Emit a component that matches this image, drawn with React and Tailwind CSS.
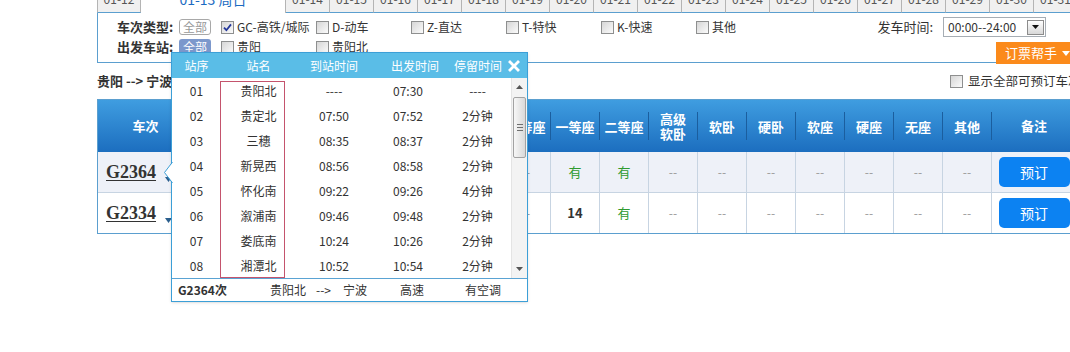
import React from "react";

const dates = [
  "01-14", "01-15", "01-16", "01-17", "01-18", "01-19", "01-20", "01-21", "01-22",
  "01-23", "01-24", "01-25", "01-26", "01-27", "01-28", "01-29", "01-30", "01-31",
];

const trainTypes = [
  { label: "GC-高铁/城际", checked: true },
  { label: "D-动车" },
  { label: "Z-直达" },
  { label: "T-特快" },
  { label: "K-快速" },
  { label: "其他" },
];

const stops = [
  ["01", "贵阳北", "----", "07:30", "----"],
  ["02", "贵定北", "07:50", "07:52", "2分钟"],
  ["03", "三穗", "08:35", "08:37", "2分钟"],
  ["04", "新晃西", "08:56", "08:58", "2分钟"],
  ["05", "怀化南", "09:22", "09:26", "4分钟"],
  ["06", "溆浦南", "09:46", "09:48", "2分钟"],
  ["07", "娄底南", "10:24", "10:26", "2分钟"],
  ["08", "湘潭北", "10:52", "10:54", "2分钟"],
];

// widths are spelled out so tailwind picks them up
const cols = [
  { w: "w-[58px]", h: "出发站" },
  { w: "w-[58px]", h: "到达站" },
  { w: "w-[52px]", h: "出发时间" },
  { w: "w-[52px]", h: "到达时间" },
  { w: "w-[45px]", h: "历时" },
  { w: "w-[49px]", h: "商务座" },
  { w: "w-[49px]", h: "特等座" },
  { w: "w-[49px]", h: "一等座" },
  { w: "w-[49px]", h: "二等座" },
  { w: "w-[49px]", h: "高级\n软卧" },
  { w: "w-[49px]", h: "软卧" },
  { w: "w-[49px]", h: "硬卧" },
  { w: "w-[49px]", h: "软座" },
  { w: "w-[49px]", h: "硬座" },
  { w: "w-[49px]", h: "无座" },
  { w: "w-[49px]", h: "其他" },
];

const trains = [
  {
    no: "G2364",
    bg: "bg-[#eef1f8]",
    cells: ["贵阳北", "宁波", "07:30", "18:02", "10:32", "--", "--", "有", "有", "--", "--", "--", "--", "--", "--", "--"],
  },
  {
    no: "G2334",
    bg: "bg-white",
    cells: ["贵阳北", "宁波", "08:25", "18:56", "10:31", "--", "--", "14", "有", "--", "--", "--", "--", "--", "--", "--"],
  },
];

const Check = ({ checked }) => (
  <span className="inline-flex h-[13px] w-[13px] shrink-0 items-center justify-center border border-[#8e8f8f] bg-linear-to-br from-[#d6d6d6] to-[#fbfbfb]">
    {checked && (
      <svg width="9" height="9" viewBox="0 0 9 9">
        <path d="M1 4.6 L3.4 7.2 L8 1.4" fill="none" stroke="#24379a" strokeWidth="1.8" />
      </svg>
    )}
  </span>
);

const Tab = ({ label, first }) => (
  <div
    className={`flex h-[27px] w-[44px] shrink-0 items-center justify-center border-r border-b border-r-[#b4b4b4] border-b-[#5b9fcf] bg-[#f0f0f0] text-[12px] text-[#555] ${first ? "w-[43px] border-l border-l-[#b4b4b4]" : ""}`}
  >
    {label}
  </div>
);

const Cell = ({ w, value }) => {
  let cls = "text-[12px] text-[#999]";
  if (value === "有") cls = "text-[13px] text-[#2f9a2f]";
  else if (value !== "--") cls = "text-[13px] font-bold text-[#333]";
  return (
    <div className={`flex h-full shrink-0 items-center justify-center border-r border-[#c7d4e2] ${w} ${cls}`}>
      {value}
    </div>
  );
};

const StopPopup = () => (
  <div className="absolute left-[171px] top-[52px] h-[250px] w-[357px] border border-[#3c9fd7] bg-white text-[12px] text-[#333] shadow-sm">
    {/* pointer toward the train number */}
    <svg className="absolute -left-[8px] top-[109px]" width="9" height="21" viewBox="0 0 9 21">
      <path d="M9 0 L0.5 10.5 L9 21 Z" fill="#fff" />
      <path d="M8.5 0 L0.5 10.5 L8.5 21" fill="none" stroke="#3c9fd7" strokeWidth="1" />
    </svg>

    <div className="flex h-[25px] items-center bg-[#5abde7] text-white">
      <span className="flex w-[49px] justify-center">站序</span>
      <span className="flex w-[75px] justify-center">站名</span>
      <span className="flex w-[76px] justify-center">到站时间</span>
      <span className="flex w-[86px] justify-center">出发时间</span>
      <span className="flex w-[40px] justify-center whitespace-nowrap">停留时间</span>
      <svg className="ml-[10px]" width="12" height="12" viewBox="0 0 12 12">
        <path d="M2 2 L10 10 M10 2 L2 10" stroke="#fff" strokeWidth="2.8" strokeLinecap="square" />
      </svg>
    </div>

    <div className="relative flex h-[200px]">
      <div className="w-[339px]">
        {stops.map((s) => (
          <div key={s[0]} className="flex h-[25px] items-center">
            <span className="w-[49px] text-center">{s[0]}</span>
            <span className="w-[75px] text-center">{s[1]}</span>
            <span className="w-[76px] text-center">{s[2]}</span>
            <span className="w-[72px] text-center">{s[3]}</span>
            <span className="w-[67px] text-center">{s[4]}</span>
          </div>
        ))}
      </div>
      {/* highlighted station column */}
      <div className="pointer-events-none absolute left-[48px] top-[3px] h-[197px] w-[65px] border border-[#c4546d]" />

      {/* scrollbar */}
      <div className="flex w-[16px] flex-col border-l border-[#e4e4e4] bg-[#f3f3f3]">
        <div className="flex h-[18px] items-center justify-center">
          <svg width="7" height="4" viewBox="0 0 7 4">
            <path d="M0 4 L3.5 0 L7 4 Z" fill="#555" />
          </svg>
        </div>
        <div className="mx-[1px] mt-[1px] flex h-[61px] items-center justify-center rounded-[2px] border border-[#a2a2a2] bg-linear-to-r from-[#f7f7f7] to-[#d9d9d9]">
          <div className="flex flex-col gap-[2px]">
            <div className="h-px w-[6px] bg-[#6f6f6f]" />
            <div className="h-px w-[6px] bg-[#6f6f6f]" />
            <div className="h-px w-[6px] bg-[#6f6f6f]" />
          </div>
        </div>
        <div className="flex-1" />
        <div className="flex h-[18px] items-center justify-center">
          <svg width="7" height="4" viewBox="0 0 7 4">
            <path d="M0 0 L3.5 4 L7 0 Z" fill="#555" />
          </svg>
        </div>
      </div>
    </div>

    <div className="flex h-[23px] items-center border-t border-[#5aa3d3] pl-[6px]">
      <span className="w-[92px] font-bold">G2364次</span>
      <span className="w-[46px]">贵阳北</span>
      <span className="w-[27px]">--&gt;</span>
      <span className="w-[57px]">宁波</span>
      <span className="w-[65px]">高速</span>
      <span>有空调</span>
    </div>
  </div>
);

export default function App() {
  return (
    <div className="relative h-[352px] w-[1070px] overflow-hidden bg-white font-['Noto_Sans_CJK_SC','Noto_Sans',sans-serif] text-[#333]">
      <div className="ml-[97px] w-[979px]">
        {/* date tabs (top edge is cut off) */}
        <div className="mt-[-14px] flex h-[27px]">
          <Tab label="01-12" first />
          <div className="flex h-[27px] w-[145px] shrink-0 items-center justify-center border-r border-[#b4b4b4] bg-white text-[14px] text-[#1b6bc2]">
            01-13 周日
          </div>
          {dates.map((d) => (
            <Tab key={d} label={d} />
          ))}
        </div>

        {/* filters */}
        <div className="border-l border-b border-[#5b9fcf] pb-[5px] pt-[4px]">
          <div className="flex h-[20px] items-center pl-[19px] pr-[30px]">
            <span className="w-[62px] shrink-0 text-[13px] font-bold">车次类型:</span>
            <span className="flex h-[16px] w-[32px] items-center justify-center rounded-[3px] border border-[#a8a8a8] text-[12px] leading-none text-[#999]">
              全部
            </span>
            <div className="ml-[10px] flex">
              {trainTypes.map((t) => (
                <label key={t.label} className="flex w-[95px] items-center text-[12px]">
                  <Check checked={t.checked} />
                  <span className="ml-[3px]">{t.label}</span>
                </label>
              ))}
            </div>
            <div className="ml-auto flex items-center">
              <span className="text-[13px]">发车时间:</span>
              <div className="ml-[10px] flex h-[20px] w-[103px] items-center border border-[#a6adb4] bg-white pl-[4px] text-[12px]">
                <span>00:00--24:00</span>
                <span className="ml-auto mr-[1px] flex h-[15px] w-[17px] items-center justify-center border border-[#8c8c8c] bg-linear-to-b from-white to-[#d8d8d8]">
                  <svg width="7" height="4" viewBox="0 0 7 4">
                    <path d="M0 0 L3.5 4 L7 0 Z" fill="#111" />
                  </svg>
                </span>
              </div>
            </div>
          </div>
          <div className="flex h-[20px] items-center pl-[19px]">
            <span className="w-[62px] shrink-0 text-[13px] font-bold">出发车站:</span>
            <span className="flex h-[16px] w-[32px] items-center justify-center rounded-[3px] bg-[#7c98cc] text-[12px] leading-none text-white">
              全部
            </span>
            <div className="ml-[10px] flex">
              <label className="flex w-[95px] items-center text-[12px]">
                <Check />
                <span className="ml-[3px]">贵阳</span>
              </label>
              <label className="flex w-[95px] items-center text-[12px]">
                <Check />
                <span className="ml-[3px]">贵阳北</span>
              </label>
            </div>
            <div className="ml-auto mt-[5px] flex h-[22px] w-[80px] self-start items-center bg-[#fb8a1b] pl-[9px] text-[13px] text-white">
              <span>订票帮手</span>
              <svg className="ml-[5px]" width="8" height="5" viewBox="0 0 8 5">
                <path d="M0 0 L4 5 L8 0 Z" fill="#fff" />
              </svg>
            </div>
          </div>
        </div>

        {/* route title */}
        <div className="flex h-[36px] items-center justify-between">
          <span className="text-[13px] font-bold">贵阳 --&gt; 宁波（1月13日 周日）共计2个车次</span>
          <label className="flex w-[126px] items-center">
            <Check />
            <span className="ml-[5px] whitespace-nowrap text-[12.5px]">显示全部可预订车次</span>
          </label>
        </div>

        {/* result table */}
        <div className="border-l border-t border-[#5b9fcf]">
          <div className="flex h-[52px] bg-linear-to-b from-[#3f9de0] to-[#1c6ebf] text-[13px] font-bold text-white">
            <div className="flex h-full w-[90px] shrink-0 items-center">
              <div className="flex-1 pl-[6px] text-center">车次</div>
              <div className="h-[28px] w-px bg-[#1b5e9e]" />
            </div>
            {cols.map((c) => (
              <div key={c.h} className={`flex h-full shrink-0 items-center ${c.w}`}>
                <div className="flex-1 whitespace-pre-line text-center leading-[15px]">{c.h}</div>
                <div className="h-[28px] w-px bg-[#1b5e9e]" />
              </div>
            ))}
            <div className="flex h-full flex-1 items-center justify-center">备注</div>
          </div>

          {trains.map((t, i) => (
            <div
              key={t.no}
              className={`flex h-[41px] border-b ${i === trains.length - 1 ? "border-[#5b9fcf]" : "border-[#c7d4e2]"} ${t.bg}`}
            >
              <div className="flex h-full w-[90px] shrink-0 items-center border-r border-[#c7d4e2] pl-[8px]">
                <span className="font-['Liberation_Serif',serif] text-[18px] font-bold text-[#333] underline underline-offset-2">
                  {t.no}
                </span>
                <svg className="ml-[9px] mt-[14px]" width="7" height="5" viewBox="0 0 7 5">
                  <path d="M0 0 L3.5 5 L7 0 Z" fill="#2b5f8e" />
                </svg>
              </div>
              {cols.map((c, j) => (
                <Cell key={c.h} w={c.w} value={t.cells[j]} />
              ))}
              <div className="flex h-full flex-1 items-center justify-center">
                <button className="flex h-[30px] w-[71px] items-center justify-center rounded-[5px] bg-[#0c82f2] text-[14px] text-white">
                  预订
                </button>
              </div>
            </div>
          ))}
        </div>
      </div>

      <StopPopup />
    </div>
  );
}
